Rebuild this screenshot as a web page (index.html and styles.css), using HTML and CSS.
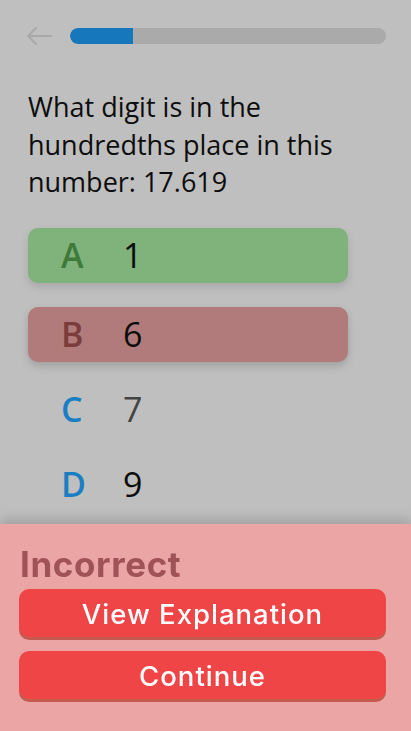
FILE: index.html
```html
<!DOCTYPE html>
<html lang="en">
<head>
<meta charset="utf-8">
<title>Quiz</title>
<link rel="stylesheet" href="styles.css">
</head>
<body>
<main class="page">
  <header class="header">
    <svg class="back" width="28" height="20" viewBox="0 0 28 20" aria-hidden="true">
      <path d="M26 10H3M11 2L3 10l8 8" fill="none" stroke="#a8a8a8" stroke-width="2" stroke-linecap="round" stroke-linejoin="round"/>
    </svg>
    <div class="track"><div class="fill" style="width:20%"></div></div>
  </header>
  <p class="question">What digit is in the hundredths place in this number: 17.619</p>
  <ul class="options">
    <li class="option correct"><span class="letter">A</span><span class="value">1</span></li>
    <li class="option wrong"><span class="letter">B</span><span class="value">6</span></li>
    <li class="option"><span class="letter">C</span><span class="value muted">7</span></li>
    <li class="option"><span class="letter">D</span><span class="value">9</span></li>
  </ul>
</main>
<section class="sheet">
  <h2 class="sheet-title">Incorrect</h2>
  <button class="btn">View Explanation</button>
  <button class="btn">Continue</button>
</section>
</body>
</html>
```
FILE: styles.css
```css
html, body {
  margin: 0;
  padding: 0;
  height: 100%;
}
body {
  background: #bfbfbf;
  font-family: "Open Sans", "DejaVu Sans", sans-serif;
  color: #0d0d0d;
  overflow: hidden;
}
.page {
  padding: 28px 25px 0 28px;
}
.header {
  display: flex;
  align-items: center;
  gap: 17px;
  height: 16px;
}
.back {
  flex: none;
  margin-left: -3px;
}
.track {
  flex: 1;
  height: 16px;
  border-radius: 8px;
  background: #aaaaaa;
  overflow: hidden;
}
.fill {
  height: 100%;
  background: #1677bd;
  border-radius: 8px 0 0 8px;
}
.question {
  margin: 44px 0 0;
  font-size: 27px;
  line-height: 37.5px;
  padding-right: 10px;
}
.options {
  list-style: none;
  margin: 27px 0 0;
  padding: 0;
  width: 320px;
  display: flex;
  flex-direction: column;
  gap: 20px;
}
.option {
  height: 55px;
  border-radius: 10px;
  display: flex;
  align-items: center;
  padding-left: 33px;
  font-size: 34px;
}
.option.correct {
  background: #80b27b;
  box-shadow: 0 4px 8px rgba(0, 0, 0, 0.12);
  margin-bottom: 4px;
}
.option.wrong {
  background: #b07b7a;
  box-shadow: 0 4px 8px rgba(0, 0, 0, 0.16);
}
.letter {
  width: 62px;
  font-weight: 600;
  color: #1a7ec4;
}
.correct .letter { color: #3f7a3b; }
.wrong .letter { color: #7a3d3c; }
.value { font-weight: 400; }
.value.muted { color: #444; }
.sheet {
  position: fixed;
  left: 0;
  right: 0;
  bottom: 0;
  height: 207px;
  box-sizing: border-box;
  background: #eba5a5;
  box-shadow: 0 -4px 12px rgba(0, 0, 0, 0.18);
  padding: 20px 25px 0 19px;
  display: flex;
  flex-direction: column;
  gap: 11px;
}
.sheet-title {
  margin: 0 0 -6px 1px;
  font-family: Inter, "Open Sans", sans-serif;
  font-weight: 700;
  font-size: 35px;
  line-height: 40px;
  color: #a05357;
  letter-spacing: 0.6px;
}
.btn {
  height: 48px;
  border: 0;
  border-radius: 10px;
  background: #f04546;
  box-shadow: 0 3px 0 #c45b4f;
  color: #fff;
  font-family: Inter, "Open Sans", sans-serif;
  font-weight: 500;
  font-size: 27.5px;
  letter-spacing: 1px;
  padding: 2px 0 0;
  margin-bottom: 3px;
}
```
